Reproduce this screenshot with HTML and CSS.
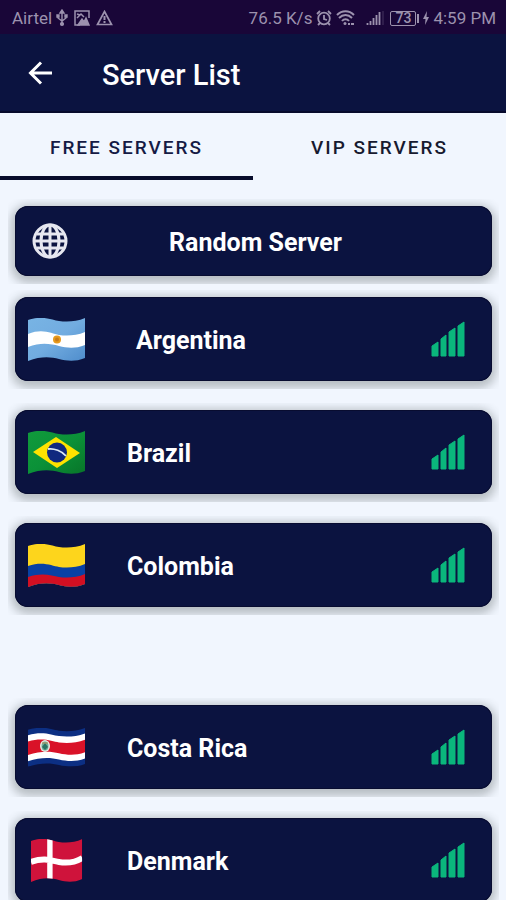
FILE: index.html
```html
<!DOCTYPE html>
<html lang="en">
<head>
<meta charset="utf-8">
<meta name="viewport" content="width=device-width, initial-scale=1">
<title>Server List</title>
<link rel="stylesheet" href="styles.css">
</head>
<body>
<svg class="defs" aria-hidden="true">
  <defs>
    <clipPath id="wave"><path d="M0 2C15-3 24 2 31 3S48 4 57 0V40C47 44 39 43 31 41S13 38 0 43Z"/></clipPath>
    <linearGradient id="sky" x1="0" y1="0" x2="1" y2="1"><stop offset="0" stop-color="#78b4e4"/><stop offset=".5" stop-color="#72ace0"/><stop offset="1" stop-color="#4f8dcc"/></linearGradient>
    <linearGradient id="leaf" x1="0" y1="0" x2="1" y2="1"><stop offset="0" stop-color="#109a3c"/><stop offset=".5" stop-color="#0b9138"/><stop offset="1" stop-color="#087529"/></linearGradient>
    <symbol id="signal" viewBox="0 0 34 36">
      <path fill="#0ab67c" stroke="#0ab67c" stroke-linejoin="round" d="M1 25L7 21V35H1ZM10 18L15 14V35H10ZM18 11L24 7V35H18ZM27 5L33 1V35H27Z"/>
    </symbol>
  </defs>
</svg>
<div class="app">
  <div class="status">
    <div class="group">
      <span>Airtel</span>
      <svg width="12" height="18" viewBox="0 0 12 18" fill="none" stroke="currentColor" stroke-width="1.4"><path d="M6 3V15M2 7V9L6 12L10 9V7"/><path fill="currentColor" d="M4 4L6 1L8 4ZM1 6H3V8H1ZM9 6H11V8H9Z"/><circle cx="6" cy="15" r="1.4" fill="currentColor"/></svg>
      <svg class="picture" width="16" height="16" viewBox="0 0 16 16" fill="none" stroke="currentColor" stroke-width="1.5"><path d="M15 8V1H1V15H6M3 4L6 5M3 8L7 4L10 7"/><path fill="currentColor" d="M4 15L8 9L10 12L12 8L15 15Z"/></svg>
      <svg width="17" height="16" viewBox="0 0 17 16" fill="none" stroke="currentColor" stroke-width="1.7"><path d="M8.500 1.500L15.500 14.500H1.500Z"/><path d="M8.500 6V10M8.500 11V13" stroke-width="2"/></svg>
    </div>
    <div class="group">
      <span>76.5 K/s</span>
      <svg width="16" height="18" viewBox="0 0 16 18" fill="none" stroke="currentColor" stroke-width="1.800"><circle cx="8" cy="9.500" r="5.800"/><path d="M8 6V10L11 11M1 5L4 2M15 5L12 2M4 14L2 16M12 14L14 16"/></svg>
      <svg width="19" height="18" viewBox="0 0 19 18" fill="none" stroke="currentColor" stroke-width="2"><path d="M1 6C6 1 13 1 18 6M3 9C7 5 12 5 16 9M6 12C8 9.500 11 9.500 13 12"/><circle cx="9" cy="14.500" r="1.500" fill="currentColor" stroke="none"/><path d="M12 15H14M15 15H18"/></svg>
      <svg class="cell" width="18" height="16" viewBox="0 0 18 16" fill="none" stroke="currentColor" stroke-width="1.800"><path d="M1.500 13V15M4.500 11V15M7.500 8V15M10.500 5V15M13.500 2V15"/><path d="M17 1V15" opacity=".35" stroke-width="1"/></svg>
      <span class="battery"><span class="level">73</span></span>
      <svg class="bolt" width="6" height="14" viewBox="0 0 6 14" fill="currentColor"><path d="M4 0L0 8H2.500L2 14L6 6H3.500Z"/></svg>
      <span>4:59 PM</span>
    </div>
  </div>
  <header class="bar">
    <button class="back" type="button" aria-label="Back"><svg width="24" height="24" viewBox="0 0 24 24" fill="none" stroke="currentColor" stroke-width="3"><path d="M13 1.500L2.500 12L13 22.500M3 12H24"/></svg></button>
    <h1>Server List</h1>
  </header>
  <nav class="tabs">
    <button class="tab active" type="button">FREE SERVERS</button>
    <button class="tab" type="button">VIP SERVERS</button>
  </nav>
  <main class="list">
    <div class="row first">
      <button class="card random" type="button">
        <svg class="globe" width="36" height="36" viewBox="0 0 36 36" fill="none" stroke="currentColor" stroke-width="3"><circle cx="18" cy="18" r="16"/><ellipse cx="18" cy="18" rx="9" ry="16"/><path d="M18 1V35M2 18H34M4.500 11H31.500M4.500 25H31.500"/></svg>
        <span class="name">Random Server</span>
      </button>
    </div>
    <div class="row">
      <button class="card indent" type="button">
        <svg class="flag" viewBox="0 0 57 43"><g clip-path="url(#wave)"><path fill="url(#sky)" d="M0 0H57V43H0Z"/><path fill="#fff" d="M0 16C15 10 24 16 31 17S48 18 57 14V27C47 31 39 30 31 28S13 24 0 29Z"/></g><circle cx="29" cy="21.500" r="4" fill="#e79a1c"/><circle cx="29" cy="21.500" r="2" fill="#c87b18"/></svg>
        <span class="name">Argentina</span>
        <svg class="signal"><use href="#signal"/></svg>
      </button>
    </div>
    <div class="row">
      <button class="card" type="button">
        <svg class="flag" viewBox="0 0 57 43"><g clip-path="url(#wave)"><path fill="url(#leaf)" d="M0 0H57V43H0Z"/></g><path fill="#fee200" d="M5 21L28 6L52 22L29 37Z"/><circle cx="29" cy="21.500" r="10" fill="#10297f"/><path d="M20 18C26 17 34 20 38 25" fill="none" stroke="#dce8f4" stroke-width="1.800"/></svg>
        <span class="name">Brazil</span>
        <svg class="signal"><use href="#signal"/></svg>
      </button>
    </div>
    <div class="row">
      <button class="card" type="button">
        <svg class="flag" viewBox="0 0 57 43"><g clip-path="url(#wave)"><path fill="#fdd51c" d="M0 0H57V43H0Z"/><path fill="#0841a4" d="M0 22C15 17 24 22 31 23S48 24 57 20V43H0Z"/><path fill="#d20f22" d="M0 33C15 28 24 32 31 33S48 34 57 30V43H0Z"/></g></svg>
        <span class="name">Colombia</span>
        <svg class="signal"><use href="#signal"/></svg>
      </button>
    </div>
    <div class="row apart">
      <button class="card" type="button">
        <svg class="flag" viewBox="0 0 57 43"><g clip-path="url(#wave)" transform="translate(0 2) scale(1 .9)"><path fill="#0c2f83" d="M0 0H57V43H0Z"/><path fill="#fff" d="M0 8C15 3 24 8 31 9S48 10 57 6V34C47 38 39 37 31 35S13 32 0 37Z"/><path fill="#d91228" d="M0 15C15 10 24 15 31 16S48 17 57 13V27C47 31 39 30 31 28S13 25 0 30Z"/></g><ellipse cx="17" cy="20" rx="5" ry="6" fill="#e9ece4"/><ellipse cx="17" cy="20" rx="3.500" ry="4.500" fill="#6fae9c"/><path fill="#2c7162" d="M14 21L17 17L20 21L17 24Z"/><path d="M14 17H20" stroke="#b48a55"/></svg>
        <span class="name">Costa Rica</span>
        <svg class="signal"><use href="#signal"/></svg>
      </button>
    </div>
    <div class="row">
      <button class="card" type="button">
        <svg class="flag" viewBox="0 0 57 43"><g clip-path="url(#wave)" transform="translate(3 0) scale(.9 1)"><path fill="#cf133b" d="M0 0H57V43H0Z"/><path d="M0 23C15 18 24 22 31 23S48 24 57 19M21 0V43" fill="none" stroke="#fff" stroke-width="6"/></g></svg>
        <span class="name">Denmark</span>
        <svg class="signal"><use href="#signal"/></svg>
      </button>
    </div>
  </main>
</div>
</body>
</html>
```

FILE: styles.css
```css
* { box-sizing: border-box; }

body {
  margin: 0;
  font-family: Roboto, "Liberation Sans", sans-serif;
  background: #f1f6fe;
}

button {
  border: 0;
  padding: 0;
  background: none;
  font: inherit;
  color: inherit;
  cursor: pointer;
}

svg { display: block; flex: none; }

.defs { position: absolute; width: 0; height: 0; }

.app {
  display: flex;
  flex-direction: column;
  height: 100vh;
  overflow: hidden;
}

.status {
  display: flex;
  flex: none;
  justify-content: space-between;
  align-items: center;
  height: 34px;
  padding: 2px 10px 0 12px;
  background: #190638;
  color: #9c92ae;
  font-size: 17px;
}

.group { display: flex; align-items: center; gap: 4px; }
.picture { margin: 0 2px; }
.cell { margin-left: 7px; }

.battery {
  position: relative;
  display: flex;
  justify-content: center;
  align-items: center;
  width: 26px;
  height: 15px;
  margin: 0 3px 0 2px;
  border: 1px solid currentColor;
  border-radius: 2px;
  font-size: 14px;
  font-weight: 500;
}

.battery::after {
  content: "";
  position: absolute;
  top: 2px;
  right: -4px;
  width: 2px;
  height: 9px;
  background: currentColor;
}

.bar {
  display: flex;
  flex: none;
  align-items: center;
  height: 79px;
  padding-left: 28px;
  border-bottom: 2px solid #070a2c;
  background: #0b1340;
  color: #fff;
}

.back { width: 74px; height: 24px; }

h1 { margin: 0; padding-top: 4px; font-size: 29px; font-weight: 500; }

.tabs { display: flex; flex: none; height: 67px; }

.tab {
  flex: 1;
  padding-top: 5px;
  border-bottom: 4px solid transparent;
  color: #171a30;
  font-size: 19px;
  font-weight: 500;
  letter-spacing: 2px;
}

.tab.active { border-color: #080c2b; color: #151b45; }

.list {
  flex: 1;
  min-height: 0;
  padding: 19px 7px 0 8px;
  overflow-y: auto;
  scrollbar-width: none;
}

.row {
  margin-bottom: 14px;
  padding: 7px 7px 8px;
  overflow: hidden;
}

.row.first { margin-bottom: 6px; }
.row.apart { margin-top: 83px; }

.card {
  display: flex;
  align-items: center;
  width: 100%;
  height: 84px;
  padding: 0 27px 0 13px;
  border-radius: 13px;
  background: #0b1340;
  box-shadow: 0 0 0 1px #080c30 inset, 0 3px 10px 4px rgb(50 60 60 / 30%);
  color: #fff;
  font-size: 25px;
  font-weight: 700;
  text-align: left;
}

.name { flex: 1; padding-top: 3px; }

.random { height: 70px; padding: 0 49px 0 17px; }
.random .name { text-align: center; }

.globe { color: #e6e7f0; }

.flag { width: 57px; height: 43px; margin-right: 42px; }
.indent .flag { margin-right: 51px; }

.signal { width: 34px; height: 36px; }
```
